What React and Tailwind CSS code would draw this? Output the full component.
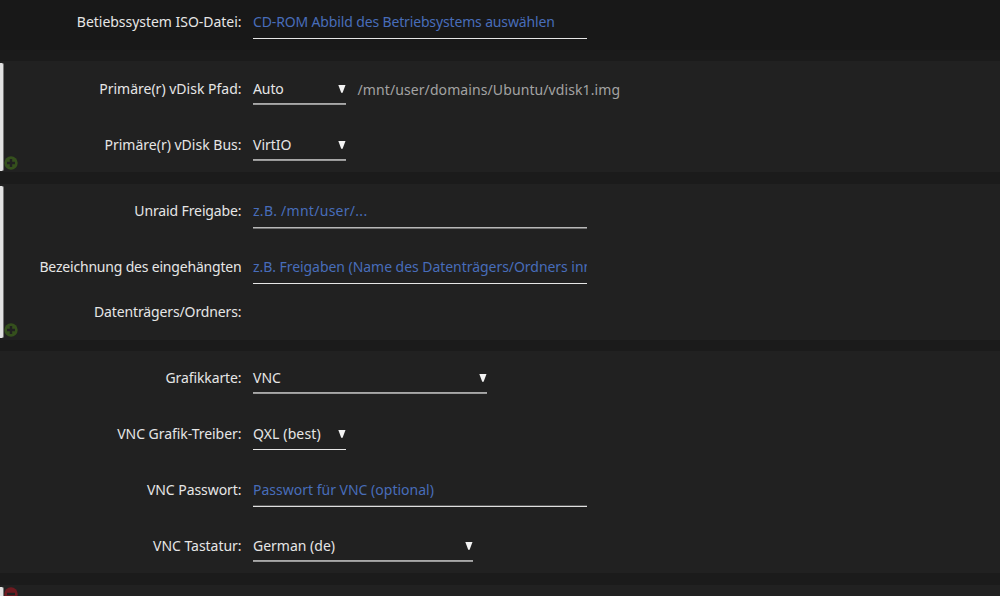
import React from "react";

const tones = {
  thin: "border-[#e6e6e6] shadow-none",
  above: "border-[#e0e0e0] shadow-[inset_0_-1px_0_#555555]",
  even: "border-[#999999] shadow-[inset_0_-1px_0_#a8a8a8]",
  below: "border-[#707070] shadow-[inset_0_-1px_0_#b8b8b8]",
};

function Label({ lines }) {
  return (
    <div className="w-[241.5px] shrink-0 text-right">
      {lines.map(([text, spacing]) => (
        <div key={text} className={`h-[45px] whitespace-nowrap leading-[44px] ${spacing}`}>{text}</div>
      ))}
    </div>
  );
}

function Row({ lines, height = "h-14", children }) {
  return (
    <div className={`flex items-start gap-[11.5px] ${height}`}>
      <Label lines={lines} />
      {children}
    </div>
  );
}

function TextField({ text, spacing = "", size = "h-[39px]", tone = "thin" }) {
  return (
    <div className={`w-[334px] overflow-hidden whitespace-nowrap border-b pt-[11px] leading-[22px] text-[#486dba] ${size} ${tones[tone]} ${spacing}`}>
      {text}
    </div>
  );
}

function SelectField({ text, width, spacing = "", size = "h-[38px]", tone = "even" }) {
  return (
    <div className={`flex shrink-0 items-start justify-between whitespace-nowrap border-b pt-[11px] leading-[22px] ${width} ${size} ${tones[tone]}`}>
      <span className={spacing}>{text}</span>
      <svg className="mt-[7px] h-2 w-[8px]" viewBox="0 0 8 8">
        <path d="M0.3 0H7.5L4.6 7.8H3.2Z" fill="#f2f2f2" />
      </svg>
    </div>
  );
}

function RoundButton({ kind, position }) {
  return (
    <svg className={`absolute left-[4px] h-[14px] w-[14px] ${position}`} viewBox="0 0 14 14">
      <circle cx="7" cy="7" r="6.7" fill={kind === "plus" ? "#35501d" : "#6e1a20"} />
      <path d={kind === "plus" ? "M3 7H11M7 3V11" : "M3 7H11"} stroke="#212121" strokeWidth="2.4" />
    </svg>
  );
}

function Marker({ size }) {
  return <div className={`absolute left-0 w-[4px] rounded-r-[2px] border-r border-[#777777] bg-[#e2e2e2] ${size}`} />;
}

export default function App() {
  return (
    <main className="flex h-[596px] w-[1000px] flex-col overflow-hidden bg-[#1b1b1b] font-['Noto_Sans','Liberation_Sans',sans-serif] text-[14px] text-[#e6e6e6]">
      <section className="h-[50px] bg-[#181818]">
        <Row lines={[["Betiebssystem ISO-Datei:", "tracking-[-0.03px]"]]}>
          <TextField text="CD-ROM Abbild des Betriebsystems auswählen" spacing="tracking-[-0.145px]" />
        </Row>
      </section>

      <section className="relative mt-[11px] h-[111px] shrink-0 bg-[#212121] pt-[6px]">
        <Marker size="top-[2px] h-[108px]" />
        <Row lines={[["Primäre(r) vDisk Pfad:", ""]]}>
          <SelectField text="Auto" width="w-[93px]" spacing="tracking-[-0.1px]" />
          <span className="leading-[46px] tracking-[0.095px] text-[#a3a3a3]">/mnt/user/domains/Ubuntu/vdisk1.img</span>
        </Row>
        <Row lines={[["Primäre(r) vDisk Bus:", ""]]}>
          <SelectField text="VirtIO" width="w-[93px]" />
        </Row>
        <RoundButton kind="plus" position="top-[94.5px]" />
      </section>

      <section className="relative mt-3 h-[156px] shrink-0 bg-[#212121] pt-[5px]">
        <Marker size="top-[2px] h-[152px]" />
        <Row lines={[["Unraid Freigabe:", "tracking-[-0.12px]"]]}>
          <TextField text="z.B. /mnt/user/..." size="h-[40px]" tone="below" spacing="tracking-[0.28px]" />
        </Row>
        <Row height="h-[100px]" lines={[["Bezeichnung des eingehängten", "tracking-[-0.19px]"], ["Datenträgers/Ordners:", "tracking-[-0.12px]"]]}>
          <TextField text="z.B. Freigaben (Name des Datenträgers/Ordners innerhalb der VM)" spacing="tracking-[-0.045px]" />
        </Row>
        <RoundButton kind="plus" position="top-[138.5px]" />
      </section>

      <section className="mt-[11px] h-[222px] shrink-0 bg-[#212121] pt-[5px]">
        <Row lines={[["Grafikkarte:", "tracking-[-0.1px]"]]}>
          <SelectField text="VNC" width="w-[234px]" />
        </Row>
        <Row lines={[["VNC Grafik-Treiber:", "tracking-[-0.04px]"]]}>
          <SelectField text="QXL (best)" width="w-[93px]" tone="thin" spacing="tracking-[0.12px]" />
        </Row>
        <Row lines={[["VNC Passwort:", "tracking-[-0.06px]"]]}>
          <TextField text="Passwort für VNC (optional)" tone="above" />
        </Row>
        <Row lines={[["VNC Tastatur:", "tracking-[-0.04px]"]]}>
          <SelectField text="German (de)" width="w-[220px]" />
        </Row>
      </section>

      <section className="relative mt-3 h-[11px] shrink-0 overflow-hidden bg-[#212121]">
        <Marker size="top-[2px] h-[40px]" />
        <RoundButton kind="minus" position="top-[2px]" />
      </section>
    </main>
  );
}
